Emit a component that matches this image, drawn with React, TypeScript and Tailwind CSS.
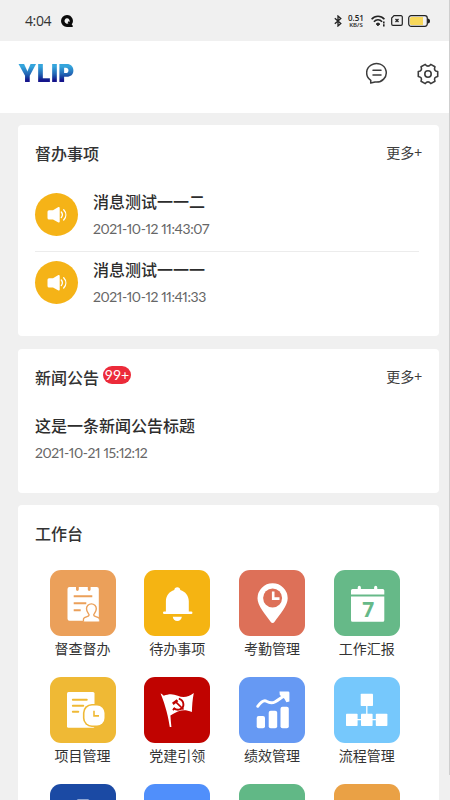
import React from 'react';

interface MessageItem {
  id: number;
  title: string;
  time: string;
}

interface AppEntry {
  id: string;
  label: string;
  color: string;
  icon: React.ReactNode;
}

const messages: MessageItem[] = [
  { id: 1, title: '消息测试一一二', time: '2021-10-12 11:43:07' },
  { id: 2, title: '消息测试一一一', time: '2021-10-12 11:41:33' },
];

// Outline of the settings gear: six lobes joined by concave curves
const gearPath = (() => {
  const point = (deg: number, r: number) => {
    const a = (deg * Math.PI) / 180;
    return `${(11 + r * Math.cos(a)).toFixed(2)} ${(11 + r * Math.sin(a)).toFixed(2)}`;
  };
  let d = `M${point(-14, 10)}`;
  for (let k = 0; k < 6; k++) {
    d += `L${point(k * 60 + 14, 10)}Q${point(k * 60 + 30, 6.2)} ${point(k * 60 + 46, 10)}`;
  }
  return `${d}Z`;
})();

const entries: AppEntry[] = [
  {
    id: 'supervise',
    label: '督查督办',
    color: 'bg-[#eba05a]',
    icon: (
      <>
        <path fill="#fff" d="M19.5 17H26v2.6a1.4 1.4 0 0 0 2.8 0V17h9v2.6a1.4 1.4 0 0 0 2.8 0V17h6.2a2 2 0 0 1 2 2v31.7H19.5a2 2 0 0 1-2-2V19a2 2 0 0 1 2-2z" />
        <path stroke="#eba05a" strokeWidth="2" d="M23.7 26.3h18.6M23.7 33.3h12.6M23.7 40.3h7" />
        <path fill="#fff" stroke="#eba05a" strokeWidth="1.4" d="M33.5 51.5v-2.4c0-2.6 5.6-2 5.6-4.2 0-1.2-2.6-2.8-2.6-6.1a4.9 4.9 0 0 1 9.8 0c0 3.3-2.6 4.9-2.6 6.1 0 2.2 5.8 1.6 5.8 4.2v2.4" />
        <path stroke="#fff" strokeWidth="1.2" d="M34.3 50.2h15" />
      </>
    ),
  },
  {
    id: 'todo',
    label: '待办事项',
    color: 'bg-[#f5b412]',
    icon: (
      <path fill="#fff" d="M33.3 17.3c1.8 0 2.8 1.1 3 2.6 5.2 1.5 8.5 5.8 8.5 11.4v10.2h2.4a1.25 1.25 0 0 1 0 2.5H20.2a1.25 1.25 0 0 1 0-2.5h1.7V31.3c0-5.6 3.2-9.9 8.4-11.4.2-1.5 1.2-2.6 3-2.6zM28.8 46.8h9a4.5 4.2 0 0 1-9 0z" />
    ),
  },
  {
    id: 'attendance',
    label: '考勤管理',
    color: 'bg-[#dd7058]',
    icon: (
      <>
        <path fill="#fff" d="M33.6 13.3a15 15 0 0 1 15.1 15c0 7.5-7.7 15.7-13.3 23.7a2.1 2.1 0 0 1-3.6 0c-5.6-8-13.3-16.2-13.3-23.7a15 15 0 0 1 15.1-15z" />
        <circle cx="33.6" cy="28" r="9.5" fill="#dd7058" />
        <path fill="none" stroke="#fff" strokeWidth="2.6" d="M34.2 21.5v7.1h6.3" />
      </>
    ),
  },
  {
    id: 'report',
    label: '工作汇报',
    color: 'bg-[#66b988]',
    icon: (
      <>
        <path fill="#fff" d="M17 24.5v-4a1.5 1.5 0 0 1 1.5-1.5h5.2v-1.6a1.6 1.6 0 0 1 3.2 0V19h13.2v-1.6a1.6 1.6 0 0 1 3.2 0V19h5.5a1.5 1.5 0 0 1 1.5 1.5v4zM17 26.5h33.3v23.7a1.5 1.5 0 0 1-1.5 1.5H18.5a1.5 1.5 0 0 1-1.5-1.5z" />
        <text x="34.3" y="47.3" textAnchor="middle" fontSize="21" className="fill-[#66b988] font-['Open_Sans'] font-bold">7</text>
      </>
    ),
  },
  {
    id: 'project',
    label: '项目管理',
    color: 'bg-[#efb935]',
    icon: (
      <>
        <rect x="17" y="15" width="27.5" height="35.7" rx="1.5" fill="#fff" />
        <path stroke="#efb935" strokeWidth="1.9" strokeLinecap="round" d="M22.8 22.7h14M22.8 28.7h10.5M22.8 34.7h5.5" />
        <rect x="32.9" y="26.9" width="23" height="23" rx="9" fill="#efb935" />
        <rect x="34.5" y="28.5" width="20" height="20" rx="7.5" fill="#fff" />
        <path fill="none" stroke="#efb935" strokeWidth="1.6" d="M44 33.7v5.2h5" />
      </>
    ),
  },
  {
    id: 'party',
    label: '党建引领',
    color: 'bg-[#c00300]',
    icon: (
      <>
        <path fill="#fff" d="M16.6 16.5c1 .4 2 1 3.2 2.3 5-2 9.2-2 14 0 5.500 2.300 10.700 1.300 16-2.900-1.400 6.800-1.700 13-1.900 19.200-7.600-3.400-12.500-2.400-21.500 3.500.3 4 .6 8 1 11.500h-1.600c-1.200-8.600-4-21-9.200-33.600z" />
        <g fill="none" stroke="#c00300">
          <path strokeWidth="1.900" d="M34.800 21.700c5.600 1.600 6.300 9 1 10.700-2.600.8-4.700-.2-6.300-1.500" />
          <path strokeWidth="1.700" d="M31.500 24.700l8 7.800M28.800 33l2.300-1.800" />
          <path strokeWidth="2.600" d="M28.800 26.900l4.700-3.600" />
        </g>
      </>
    ),
  },
  {
    id: 'performance',
    label: '绩效管理',
    color: 'bg-[#6699f3]',
    icon: (
      <>
        <g fill="#fff">
          <rect x="17.700" y="39" width="8.300" height="12.300" rx="2" />
          <rect x="29.700" y="33.700" width="8.500" height="17.600" rx="2" />
          <rect x="41.500" y="29.700" width="8.300" height="21.600" rx="2" />
          <path d="M40.500 14.500h8.600a1.300 1.300 0 0 1 1.300 1.300v8.700l-3 .8-2-3.600-4.600-3.800z" />
        </g>
        <path fill="none" stroke="#fff" strokeWidth="2.900" strokeLinecap="round" d="M18.700 29.300c3.500-4.600 6.300-6.600 8.800-5 3.300 2 5.500 2.300 8.800.4 3.600-2 5.700-4 10.200-6.700" />
      </>
    ),
  },
  {
    id: 'workflow',
    label: '流程管理',
    color: 'bg-[#76c8fc]',
    icon: (
      <>
        <path fill="none" stroke="#fff" strokeWidth="1.300" d="M32.800 28v10M20 42.700h26" />
        <g fill="#fff">
          <rect x="26.700" y="16.700" width="12.300" height="12.300" rx=".7" />
          <rect x="12" y="36.800" width="11.600" height="12.200" rx=".7" />
          <rect x="27" y="36.800" width="11.600" height="12.200" rx=".7" />
          <rect x="41.800" y="36.800" width="11.600" height="12.200" rx=".7" />
        </g>
      </>
    ),
  },
  {
    id: 'files',
    label: '',
    color: 'bg-[#1b4aa4]',
    icon: <rect x="26.500" y="15.400" width="13" height="20" rx="1.500" fill="#fff" />,
  },
  { id: 'meeting', label: '', color: 'bg-[#508ffb]', icon: null },
  { id: 'assets', label: '', color: 'bg-[#61b886]', icon: null },
  { id: 'approval', label: '', color: 'bg-[#eaa145]', icon: null },
];

const StatusBar: React.FC = () => (
  <div className="flex h-[41px] shrink-0 items-center justify-between bg-[#f0f0f0] pl-[25px] pr-[19px]">
    <div className="flex items-center gap-[9px]">
      <span className="w-[27px] whitespace-nowrap font-['Open_Sans'] text-[14px] leading-5 tracking-[-0.4px] text-[#333]">4:04</span>
      <svg className="h-3 w-3" viewBox="0 0 12 12">
        <path fill="#0a0a0a" d="M6 0a6 6 0 0 1 4.700 9.600l1 .9V12H6A6 6 0 0 1 6 0z" />
        <path fill="#f0f0f0" d="M6 3.300a2.700 2.700 0 0 1 2.500 3.600l-1.200-.6-.6 1.300.9.700A2.700 2.700 0 1 1 6 3.300z" />
      </svg>
    </div>
    <div className="flex items-center">
      <svg className="h-3 w-2" viewBox="0 0 8 12" fill="none" stroke="#222" strokeWidth="1.300">
        <path d="M.8 3.200l6 5.400L4 11V1l2.800 2.400L.8 8.800" />
      </svg>
      <div className="ml-[5px] flex w-[18px] flex-col items-center font-['Open_Sans'] font-semibold text-[#222]">
        <span className="text-[8px] leading-[8px]">0.51</span>
        <span className="text-[6px] leading-[6px]">KB/S</span>
      </div>
      <svg className="ml-[6px] h-3 w-[15px]" viewBox="0 0 15 12" fill="none" stroke="#222" strokeWidth="1.600">
        <path d="M.6 4.200c3.500-4 9.300-4 12.800 0M2.900 6.700c2.400-2.600 5.800-2.600 8.200 0" />
        <path d="M5.200 9c1.200-1.200 2.400-1.200 3.600 0L7 10.800z" fill="#222" strokeWidth="1" />
        <path d="M12.800 6.500v2M12.800 9.300v2.200" />
      </svg>
      <svg className="ml-[5px] h-[11px] w-3" viewBox="0 0 12 11" fill="none" stroke="#222">
        <path strokeWidth="1.200" d="M3 .7h7a1.300 1.300 0 0 1 1.300 1.300v7A1.300 1.300 0 0 1 10 10.300H2A1.300 1.300 0 0 1 .7 9V3z" />
        <path strokeWidth="1.300" d="M4.500 4l3 3M7.500 4l-3 3" />
      </svg>
      <svg className="ml-[5px] h-3 w-[22px]" viewBox="0 0 22 12">
        <rect x=".7" y=".7" width="18.600" height="10.600" rx="2.500" fill="#f0f0f0" stroke="#222" strokeWidth="1.200" />
        <path fill="#f8d85a" d="M3.500 2H15v8H3.500A1.500 1.500 0 0 1 2 8.500v-5A1.500 1.500 0 0 1 3.500 2z" />
        <path fill="#222" d="M19.500 3.500a2.500 2.500 0 0 1 0 5z" />
      </svg>
    </div>
  </div>
);

const Header: React.FC = () => (
  <header className="flex h-[72px] shrink-0 items-center justify-between bg-white pl-[18px] pr-[10px]">
    <h1 className="mt-[-7px] bg-linear-to-b from-[#35a5dc] from-25% via-[#2466b4] via-50% to-[#15158c] to-70% bg-clip-text font-['Inter'] text-[24px] font-black leading-[30px] tracking-[0.4px] text-transparent">
      YLIP
    </h1>
    <div className="mt-[-7px] flex items-center gap-[29px]">
      <button className="mt-[-2px]" aria-label="消息">
        <svg className="h-[22px] w-[22px]" viewBox="0 0 22 22" fill="none" stroke="#3c3c3c" strokeWidth="1.500" strokeLinecap="round" strokeLinejoin="round">
          <path d="M4.800 18.400A9.800 9.300 0 1 1 9 20l-4.300 1.100z" />
          <path d="M7 8.300h8M7 13h8" />
        </svg>
      </button>
      <button aria-label="设置">
        <svg className="h-[22px] w-[22px]" viewBox="0 0 22 22" fill="none" stroke="#3c3c3c" strokeWidth="1.600" strokeLinejoin="round">
          <path d={gearPath} />
          <circle cx="11" cy="11" r="3.200" />
        </svg>
      </button>
    </div>
  </header>
);

const SpeakerIcon: React.FC = () => (
  <div className="flex h-[43px] w-[43px] shrink-0 items-center justify-center rounded-full bg-[#f5b317]">
    <svg className="h-[18px] w-5" viewBox="0 0 20 18">
      <path fill="#fff" d="M2 4.200h4L11 1.300c.9-.5 1.700-.1 1.700.9v13.200c0 1-.8 1.400-1.700.9l-5-2.900H2A1.500 1.500 0 0 1 .5 11.900V5.700A1.500 1.500 0 0 1 2 4.200z" />
      <path fill="none" stroke="#fff" strokeWidth="1.300" strokeLinecap="round" d="M14.300 6a4.500 4.500 0 0 1 0 5.600M16.700 3.800c2.800 3 2.800 7.200 0 10.200" />
    </svg>
  </div>
);

const MoreLink: React.FC = () => (
  <button className="mt-[-2px] text-[14px] leading-5 text-[#3d3d3d]">更多+</button>
);

const App: React.FC = () => {
  return (
    <div className="flex h-[800px] w-[450px] overflow-hidden bg-[#f0f0f0] font-['Noto_Sans_CJK_SC',sans-serif]">
      <div className="flex w-[449px] shrink-0 flex-col">
        <StatusBar />
        <Header />

        <main className="flex shrink-0 flex-col pl-[18px] pr-[10px] pt-3">
          {/* Supervised items */}
          <section className="h-[211px] rounded-[4px] bg-white pl-[17px] pr-[17px] pt-4">
            <div className="flex items-center justify-between">
              <h2 className="text-[16px] font-medium leading-6 text-[#333]">督办事项</h2>
              <MoreLink />
            </div>
            <div className="mr-[3px] mt-[18px]">
              {messages.map(item => (
                <div
                  key={item.id}
                  className="flex h-[69px] items-start border-b border-[#ececec] pt-[10px] last:border-transparent last:pt-[9px]"
                >
                  <SpeakerIcon />
                  <div className="ml-[15px] mt-[-4px]">
                    <h3 className="text-[16px] font-medium leading-6 text-[#2d2d2d]">{item.title}</h3>
                    <p className="mt-[6px] whitespace-nowrap font-['Lato'] text-[14px] leading-5 tracking-[-0.42px] text-[#666] proportional-nums">{item.time}</p>
                  </div>
                </div>
              ))}
            </div>
          </section>

          {/* News */}
          <section className="mt-[13px] h-[144px] rounded-[4px] bg-white px-[17px] pt-4">
            <div className="flex items-center justify-between">
              <div className="flex items-start">
                <h2 className="text-[16px] font-medium leading-6 text-[#333]">新闻公告</h2>
                <span className="ml-1 mt-px flex h-[18px] w-7 items-center justify-center rounded-full bg-[#ec2b3a] font-['Lato'] text-[14px] leading-none text-white">
                  99+
                </span>
              </div>
              <MoreLink />
            </div>
            <h3 className="mt-6 text-[16px] font-medium leading-6 text-[#2d2d2d]">这是一条新闻公告标题</h3>
            <p className="mt-[6px] whitespace-nowrap font-['Lato'] text-[14px] leading-5 tracking-[-0.4px] text-[#666] proportional-nums">2021-10-21 15:12:12</p>
          </section>

          {/* Workbench */}
          <section className="mt-3 rounded-t-[4px] bg-white pt-4">
            <h2 className="ml-[17px] text-[16px] font-medium leading-6 text-[#333]">工作台</h2>
            <div className="ml-[17.200px] mt-[25px] grid w-[379px] grid-cols-4">
              {entries.map(entry => (
                <div key={entry.id} className="flex h-[107px] flex-col items-center">
                  <div className={`h-[66px] w-[66px] shrink-0 rounded-[11px] ${entry.color}`}>
                    <svg className="h-[66px] w-[66px]" viewBox="0 0 66 66">
                      {entry.icon}
                    </svg>
                  </div>
                  <span className="mt-[2px] text-[14px] leading-5 text-[#333]">{entry.label}</span>
                </div>
              ))}
            </div>
          </section>
        </main>
      </div>
      <div className="h-[775px] w-px bg-[#cfcfcf]" />
    </div>
  );
};

export default App;
